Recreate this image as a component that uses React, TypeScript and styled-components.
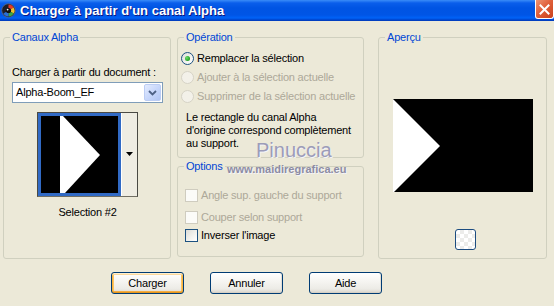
import React from 'react';
import styled, { createGlobalStyle } from 'styled-components';

const GlobalStyle = createGlobalStyle`
  html, body {
    margin: 0;
    padding: 0;
    background: #ECE9D8;
  }
  body {
    width: 554px;
    height: 306px;
    overflow: hidden;
    font-family: "Liberation Sans", Arial, sans-serif;
    font-size: 11px;
    letter-spacing: -0.2px;
    color: #000;
  }
`;

const Window = styled.div`
  position: relative;
  width: 554px;
  height: 306px;
  background: #ECE9D8;
  overflow: hidden;
`;

// title bar
const TitleBar = styled.div`
  height: 21px;
  display: flex;
  align-items: center;
  padding-left: 1px;
  background: linear-gradient(
    to bottom,
    #3A8CF8 0px,
    #0A5EEB 3px,
    #0054E3 8px,
    #0055E6 15px,
    #0062F7 18px,
    #0042C9 20px,
    #003AB8 21px
  );
`;

const TitleText = styled.span`
  margin-left: 4px;
  color: #fff;
  font-weight: bold;
  font-size: 13px;
  line-height: 13px;
  letter-spacing: 0;
  text-shadow: 1px 1px 0 #0A1883;
`;

const CloseButton = styled.div`
  margin-left: auto;
  align-self: flex-start;
  width: 19px;
  height: 19px;
  box-sizing: border-box;
  border: 1px solid #fff;
  border-top: none;
  border-radius: 0 0 3px 3px;
  background: linear-gradient(135deg, #EE9474 0%, #E0603A 45%, #C9411C 100%);
  display: flex;
  align-items: center;
  justify-content: center;
`;

// body
const Body = styled.div`
  padding: 10px 0 0 3px;
`;

const Columns = styled.div`
  display: flex;
  align-items: flex-start;
`;

const MiddleColumn = styled.div`
  display: flex;
  flex-direction: column;
  gap: 2px;
  margin: 0 14px 0 6px;
`;

const Group = styled.fieldset<{ $w: number; $h: number }>`
  margin: 0;
  padding: 0;
  min-width: 0;
  width: ${p => p.$w}px;
  height: ${p => p.$h}px;
  box-sizing: border-box;
  border: 1px solid #D0D0BF;
  border-radius: 3px;
`;

const Legend = styled.legend`
  padding: 0 2px;
  margin-left: 6px;
  color: #0046D5;
  line-height: 13px;
`;

const LeftContent = styled.div`
  display: flex;
  flex-direction: column;
  padding: 22px 7px 0 8px;
`;

const Label = styled.div`
  line-height: 13px;
`;

const Select = styled.div`
  margin-top: 3px;
  width: 151px;
  height: 21px;
  box-sizing: border-box;
  border: 1px solid #7F9DB9;
  background: #fff;
  display: flex;
  align-items: center;
  padding: 1px;
`;

const SelectValue = styled.span`
  flex: 1;
  padding-left: 2px;
  line-height: 13px;
`;

const SelectArrow = styled.span`
  width: 17px;
  height: 17px;
  box-sizing: border-box;
  border: 1px solid #BCCDF4;
  border-radius: 2px;
  background: linear-gradient(135deg, #E3EBFE 0%, #C6D6FB 55%, #B2C6F4 100%);
  display: flex;
  align-items: center;
  justify-content: center;
`;

const Thumb = styled.div`
  margin-top: 9px;
  align-self: center;
  display: flex;
  border: 1px solid #4A4A44;
  border-bottom-color: #716F64;
`;

const ThumbImage = styled.div`
  width: 83px;
  height: 83px;
  box-sizing: border-box;
  border: 3px solid #316AC5;
  background: #000;
  display: flex;
`;

const ThumbArrow = styled.div`
  width: 16px;
  box-sizing: border-box;
  border-left: 1px solid #fff;
  background: #EFEDE3;
  display: flex;
  align-items: center;
  justify-content: center;
  padding-bottom: 2px;
`;

const Caption = styled.div`
  margin-top: 9px;
  text-align: center;
  line-height: 13px;
`;

const OpContent = styled.div`
  display: flex;
  flex-direction: column;
  gap: 6px;
  padding: 8px 0 0 3px;
`;

const OptRow = styled.div<{ $disabled?: boolean; $mt?: number }>`
  display: flex;
  align-items: center;
  gap: 3px;
  height: 13px;
  line-height: 13px;
  margin-top: ${p => p.$mt ?? 0}px;
  color: ${p => (p.$disabled ? '#ACA899' : '#000')};
  white-space: nowrap;
`;

const RadioDot = styled.span<{ $checked?: boolean; $disabled?: boolean }>`
  flex: none;
  width: 13px;
  height: 13px;
  box-sizing: border-box;
  border-radius: 50%;
  border: 1px solid ${p => (p.$disabled ? '#D6D3C6' : '#1C5180')};
  background: ${p =>
    p.$disabled ? '#F3F1E9' : 'linear-gradient(135deg, #DCDCD7 0%, #F4F4F1 60%, #FFFFFF 100%)'};
  display: flex;
  align-items: center;
  justify-content: center;
  &::after {
    content: '';
    display: ${p => (p.$checked ? 'block' : 'none')};
    width: 5px;
    height: 5px;
    border-radius: 50%;
    background: radial-gradient(circle at 35% 35%, #6BDB6B, #21A121 70%);
  }
`;

const Note = styled.p`
  margin: 2px 0 0 5px;
  line-height: 13px;
  white-space: nowrap;
`;

const OptionsContent = styled.div`
  display: flex;
  flex-direction: column;
  padding-left: 7px;
`;

const CheckBox = styled.span<{ $disabled?: boolean }>`
  flex: none;
  width: 13px;
  height: 13px;
  box-sizing: border-box;
  border: 1px solid ${p => (p.$disabled ? '#CFCCBF' : '#1C5180')};
  background: ${p =>
    p.$disabled ? '#FBFBF8' : 'linear-gradient(135deg, #DCDCD7 0%, #F3F3EF 60%, #FFFFFF 100%)'};
`;

const PreviewContent = styled.div`
  display: flex;
  flex-direction: column;
  align-items: center;
`;

const Preview = styled.svg`
  margin-top: 55px;
  display: block;
`;

const TransparentButton = styled.div`
  margin: 37px 0 0 5px;
  width: 21px;
  height: 21px;
  box-sizing: border-box;
  border: 1px solid #1C4C80;
  border-radius: 3px;
  background: conic-gradient(#ECECEA 25%, #FFFFFF 0 50%, #ECECEA 0 75%, #FFFFFF 0) 0 0 / 8px 8px;
`;

const ButtonRow = styled.div`
  display: flex;
  gap: 26px;
  margin-top: 13px;
  padding-left: 108px;
`;

const Button = styled.div<{ $default?: boolean }>`
  width: 73px;
  height: 22px;
  box-sizing: border-box;
  border: 1px solid #003C74;
  border-radius: 3px;
  background: linear-gradient(to bottom, #FFFFFF 0%, #F5F4F0 45%, #ECEBE6 80%, #D8D3C9 100%);
  display: flex;
  align-items: center;
  justify-content: center;
  line-height: 13px;
  box-shadow: ${p =>
    p.$default
      ? 'inset 0 1px 0 #FFF0CF, inset 0 -1px 0 #E5971F, inset 1px 0 0 #F9B33F, inset -1px 0 0 #F9B33F, inset 0 2px 0 #FCD89B, inset 0 -2px 0 #F3AC43, inset 2px 0 0 #FBC666, inset -2px 0 0 #FBC666'
      : 'inset 0 -1px 0 #D6D0C5, inset -1px 0 0 #E3DFD6'};
`;

// watermark lying over the dialog
const WatermarkName = styled.span`
  position: absolute;
  left: 256px;
  top: 140px;
  font-size: 20px;
  line-height: 20px;
  letter-spacing: 0;
  color: #9C9CB8;
  text-shadow: 1px 1px 0 #F4F4F8;
  pointer-events: none;
`;

const WatermarkUrl = styled.span`
  position: absolute;
  left: 227px;
  top: 164px;
  font-size: 11px;
  line-height: 11px;
  font-weight: bold;
  letter-spacing: 0;
  color: #8C8CA4;
  text-shadow: 1px 1px 0 #F4F4F8;
  pointer-events: none;
`;

function AppIcon() {
  return (
    <svg width="15" height="15" viewBox="0 0 15 15">
      <circle cx="7.5" cy="7.5" r="6.8" fill="#1E1E28" stroke="#5A6A8A" strokeWidth="0.8" />
      <path d="M7.5 7.5 L7.5 1.5 A6 6 0 0 1 12.7 4.5 Z" fill="#E23A2A" />
      <path d="M7.5 7.5 L12.7 4.5 A6 6 0 0 1 12.7 10.5 Z" fill="#F2C12E" />
      <path d="M7.5 7.5 L12.7 10.5 A6 6 0 0 1 7.5 13.5 Z" fill="#3AA845" />
      <path d="M7.5 7.5 L7.5 13.5 A6 6 0 0 1 2.3 10.5 Z" fill="#2B6FD6" />
      <circle cx="7.5" cy="7.5" r="2.6" fill="#111" />
      <circle cx="6.6" cy="6.6" r="0.9" fill="#fff" />
    </svg>
  );
}

function Radio({ label, checked, disabled }: { label: string; checked?: boolean; disabled?: boolean }) {
  return (
    <OptRow $disabled={disabled}>
      <RadioDot $checked={checked} $disabled={disabled} />
      <span>{label}</span>
    </OptRow>
  );
}

function Check({ label, disabled, mt }: { label: string; disabled?: boolean; mt: number }) {
  return (
    <OptRow $disabled={disabled} $mt={mt}>
      <CheckBox $disabled={disabled} />
      <span>{label}</span>
    </OptRow>
  );
}

export default function App() {
  return (
    <Window>
      <GlobalStyle />
      <TitleBar>
        <AppIcon />
        <TitleText>Charger à partir d'un canal Alpha</TitleText>
        <CloseButton>
          <svg width="11" height="11" viewBox="0 0 11 11">
            <path d="M1.5 1.5 L9.5 9.5 M9.5 1.5 L1.5 9.5" stroke="#fff" strokeWidth="2" strokeLinecap="square" />
          </svg>
        </CloseButton>
      </TitleBar>
      <Body>
        <Columns>
          <Group $w={168} $h={228}>
            <Legend>Canaux Alpha</Legend>
            <LeftContent>
              <Label>Charger à partir du document :</Label>
              <Select>
                <SelectValue>Alpha-Boom_EF</SelectValue>
                <SelectArrow>
                  <svg width="9" height="6" viewBox="0 0 9 6">
                    <path d="M1 1 L4.5 4.5 L8 1" fill="none" stroke="#4D6185" strokeWidth="1.8" />
                  </svg>
                </SelectArrow>
              </Select>
              <Thumb>
                <ThumbImage>
                  <svg width="77" height="77" viewBox="0 0 77 77">
                    <polygon points="19,0 22,0 59,39 24,77 19,77" fill="#fff" />
                  </svg>
                </ThumbImage>
                <ThumbArrow>
                  <svg width="7" height="4" viewBox="0 0 7 4">
                    <polygon points="0,0 7,0 3.5,4" fill="#000" />
                  </svg>
                </ThumbArrow>
              </Thumb>
              <Caption>Selection #2</Caption>
            </LeftContent>
          </Group>
          <MiddleColumn>
            <Group $w={187} $h={127}>
              <Legend>Opération</Legend>
              <OpContent>
                <Radio label="Remplacer la sélection" checked />
                <Radio label="Ajouter à la sélection actuelle" disabled />
                <Radio label="Supprimer de la sélection actuelle" disabled />
                <Note>
                  Le rectangle du canal Alpha
                  <br />
                  d'origine correspond complètement
                  <br />
                  au support.
                </Note>
              </OpContent>
            </Group>
            <Group $w={187} $h={97}>
              <Legend>Options</Legend>
              <OptionsContent>
                <Check label="Angle sup. gauche du support" disabled mt={16} />
                <Check label="Couper selon support" disabled mt={9} />
                <Check label="Inverser l'image" mt={5} />
              </OptionsContent>
            </Group>
          </MiddleColumn>
          <Group $w={169} $h={228}>
            <Legend>Aperçu</Legend>
            <PreviewContent>
              <Preview width="140" height="93" viewBox="0 0 140 93">
                <rect width="140" height="93" fill="#000" />
                <polygon points="0,0 47,47 1,93 0,93" fill="#fff" />
              </Preview>
              <TransparentButton />
            </PreviewContent>
          </Group>
        </Columns>
        <ButtonRow>
          <Button $default>Charger</Button>
          <Button>Annuler</Button>
          <Button>Aide</Button>
        </ButtonRow>
      </Body>
      <WatermarkName>Pinuccia</WatermarkName>
      <WatermarkUrl>www.maidiregrafica.eu</WatermarkUrl>
    </Window>
  );
}
